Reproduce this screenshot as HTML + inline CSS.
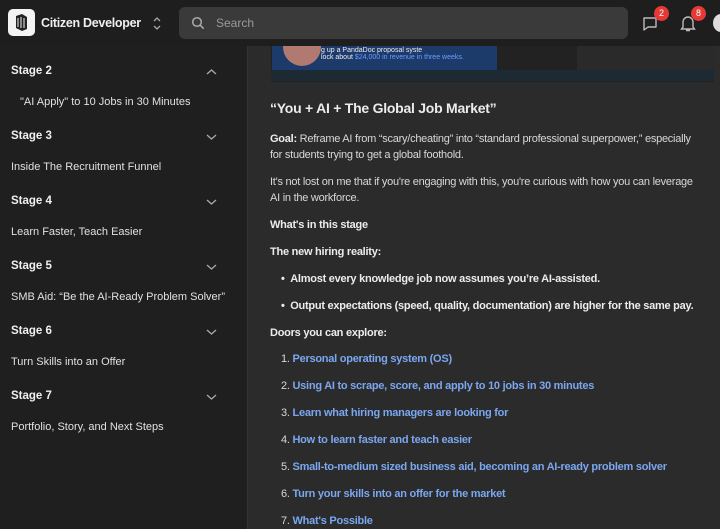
<!DOCTYPE html>
<html><head><meta charset="utf-8"><style>
*{margin:0;padding:0;box-sizing:border-box}
body{width:720px;height:529px;overflow:hidden;background:#2b2b2b;font-family:"Liberation Sans",sans-serif;color:#e6e6e6;position:relative}
.hdr{position:absolute;left:0;top:0;width:720px;height:46px;background:#1e1e1e;z-index:3}
.logo{position:absolute;left:8px;top:9px;width:27px;height:27px;background:#f4f4f4;border-radius:5px}
.brand{position:absolute;left:41px;top:16px;font-size:12.5px;font-weight:bold;color:#f0f0f0;letter-spacing:-0.3px}
.search{position:absolute;left:179px;top:7px;width:449px;height:32px;background:#3a3a3a;border-radius:6px}
.search span{position:absolute;left:37px;top:9px;font-size:12px;color:#9a9a9a}
.badge{position:absolute;width:15px;height:15px;border-radius:50%;background:#e53935;color:#fff;font-size:9px;text-align:center;line-height:15px}
.side{position:absolute;left:0;top:46px;width:248px;height:483px;background:#1f1f1f;border-right:1px solid #333}
.st{position:absolute;left:11px;font-size:11.5px;font-weight:bold;color:#f0f0f0}
.si{position:absolute;left:11px;font-size:11px;color:#e0e0e0}
.chev{position:absolute;left:206px;width:11px;height:8px}
.main{position:absolute;left:270px;font-size:11px;color:#d8d8d8;line-height:16px;letter-spacing:-0.25px}
.b{font-weight:bold;color:#ececec}
.lk{position:absolute;left:270px;font-size:11px;font-weight:bold;color:#7aa7f0;letter-spacing:-0.25px}
.lk i{font-style:normal;color:#d8d8d8;font-weight:normal}
</style></head><body>
<div class="hdr">
<div class="logo"><svg width="27" height="27" viewBox="0 0 27 27"><path d="M8 7l6-2 5 3v12l-5 2-6-3z" fill="#222"/><path d="M10 9v9M13 8v11M16 9v10" stroke="#f4f4f4" stroke-width="1"/></svg></div>
<div class="brand">Citizen Developer</div>
<svg style="position:absolute;left:152px;top:16px" width="10" height="15" viewBox="0 0 10 15"><path d="M2 5l3-3 3 3M2 10l3 3 3-3" stroke="#aaa" stroke-width="1.3" fill="none"/></svg>
<div class="search"><svg style="position:absolute;left:12px;top:9px" width="14" height="14" viewBox="0 0 14 14"><circle cx="6" cy="6" r="4.3" stroke="#aaa" stroke-width="1.5" fill="none"/><path d="M9.2 9.2l3.5 3.5" stroke="#aaa" stroke-width="1.5"/></svg><span>Search</span></div>
<svg style="position:absolute;left:641px;top:15px" width="18" height="18" viewBox="0 0 18 18"><path d="M3 3h12v9H7l-4 3z" stroke="#bbb" stroke-width="1.4" fill="none" stroke-linejoin="round"/></svg>
<div class="badge" style="left:654px;top:6px">2</div>
<svg style="position:absolute;left:679px;top:14px" width="18" height="19" viewBox="0 0 18 19"><path d="M4 13V8a5 5 0 0110 0v5l1.5 2h-13z M7 16.5h4" stroke="#bbb" stroke-width="1.4" fill="none"/></svg>
<div class="badge" style="left:691px;top:6px">8</div>
<div style="position:absolute;left:713px;top:14px;width:16px;height:18px;border-radius:50%;background:#ddd"></div>
</div>
<div class="side">
<div class="st" style="top:19px">Stage 2</div><svg class="chev" style="top:22px" viewBox="0 0 11 8"><path d="M1 6l4.5-4 4.5 4" stroke="#aaa" stroke-width="1.3" fill="none"/></svg>
<div class="si" style="left:20px;top:50px">"AI Apply" to 10 Jobs in 30 Minutes</div>
<div class="st" style="top:84px">Stage 3</div><svg class="chev" style="top:87px" viewBox="0 0 11 8"><path d="M1 2l4.5 4 4.5-4" stroke="#aaa" stroke-width="1.3" fill="none"/></svg>
<div class="si" style="top:115px">Inside The Recruitment Funnel</div>
<div class="st" style="top:149px">Stage 4</div><svg class="chev" style="top:152px" viewBox="0 0 11 8"><path d="M1 2l4.5 4 4.5-4" stroke="#aaa" stroke-width="1.3" fill="none"/></svg>
<div class="si" style="top:180px">Learn Faster, Teach Easier</div>
<div class="st" style="top:214px">Stage 5</div><svg class="chev" style="top:217px" viewBox="0 0 11 8"><path d="M1 2l4.5 4 4.5-4" stroke="#aaa" stroke-width="1.3" fill="none"/></svg>
<div class="si" style="top:245px">SMB Aid: “Be the AI-Ready Problem Solver”</div>
<div class="st" style="top:279px">Stage 6</div><svg class="chev" style="top:282px" viewBox="0 0 11 8"><path d="M1 2l4.5 4 4.5-4" stroke="#aaa" stroke-width="1.3" fill="none"/></svg>
<div class="si" style="top:310px">Turn Skills into an Offer</div>
<div class="st" style="top:344px">Stage 7</div><svg class="chev" style="top:347px" viewBox="0 0 11 8"><path d="M1 2l4.5 4 4.5-4" stroke="#aaa" stroke-width="1.3" fill="none"/></svg>
<div class="si" style="top:375px">Portfolio, Story, and Next Steps</div>
</div>
<div style="position:absolute;left:271px;top:46px;width:443px;height:36px;background:#222">
<div style="position:absolute;left:1px;top:0;width:225px;height:24px;background:#1c3a6a"></div>
<div style="position:absolute;left:12px;top:0;width:38px;height:20px;border-radius:0 0 20px 20px;background:#b07a70"></div>
<div style="position:absolute;left:50px;top:1px;font-size:7px;color:#eee;white-space:nowrap">g up a PandaDoc proposal syste<br>lock about <span style="color:#6aa0ff">$24,000 in revenue in three weeks.</span></div>
<div style="position:absolute;left:0;top:24px;width:443px;height:11px;background:#1d2a34"></div>
<div style="position:absolute;left:306px;top:0;width:137px;height:24px;background:#2a2a2a"></div>
</div>
<div class="main b" style="top:100px;font-size:14px">“You + AI + The Global Job Market”</div>
<div class="main" style="top:131px"><span class="b">Goal:</span> Reframe AI from “scary/cheating” into “standard professional superpower,” especially<br>for students trying to get a global foothold.</div>
<div class="main" style="top:174px">It's not lost on me that if you're engaging with this, you're curious with how you can leverage<br>AI in the workforce.</div>
<div class="main b" style="top:217px">What's in this stage</div>
<div class="main b" style="top:244px">The new hiring reality:</div>
<div class="main b" style="top:271px;left:281px">•&nbsp;&nbsp;Almost every knowledge job now assumes you’re AI-assisted.</div>
<div class="main b" style="top:298px;left:281px">•&nbsp;&nbsp;Output expectations (speed, quality, documentation) are higher for the same pay.</div>
<div class="main b" style="top:325px">Doors you can explore:</div>
<div class="lk" style="top:353px;left:281px"><i>1. </i>Personal operating system (OS)</div>
<div class="lk" style="top:380px;left:281px"><i>2. </i>Using AI to scrape, score, and apply to 10 jobs in 30 minutes</div>
<div class="lk" style="top:407px;left:281px"><i>3. </i>Learn what hiring managers are looking for</div>
<div class="lk" style="top:434px;left:281px"><i>4. </i>How to learn faster and teach easier</div>
<div class="lk" style="top:461px;left:281px"><i>5. </i>Small-to-medium sized business aid, becoming an AI-ready problem solver</div>
<div class="lk" style="top:488px;left:281px"><i>6. </i>Turn your skills into an offer for the market</div>
<div class="lk" style="top:515px;left:281px"><i>7. </i>What's Possible</div>
</body></html>
